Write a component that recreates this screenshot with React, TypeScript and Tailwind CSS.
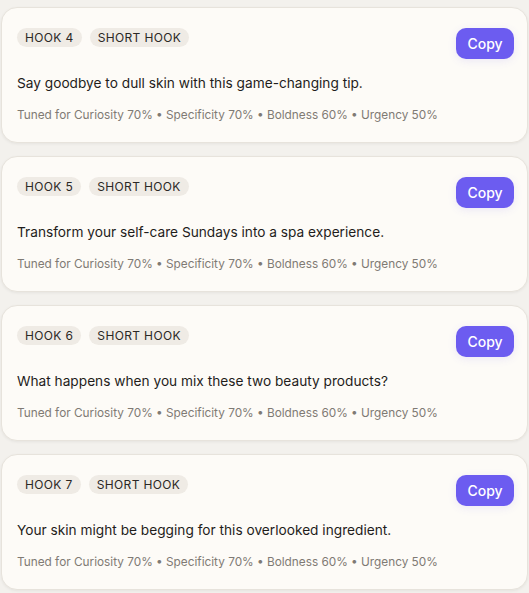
import React from "react";

const hooks = [
  { n: 4, text: "Say goodbye to dull skin with this game-changing tip." },
  { n: 5, text: "Transform your self-care Sundays into a spa experience." },
  { n: 6, text: "What happens when you mix these two beauty products?" },
  { n: 7, text: "Your skin might be begging for this overlooked ingredient." },
];

function Card({ n, text }: { n: number; text: string }) {
  return (
    <div className="rounded-[16px] border border-[#e7e3dc] bg-[#fdfbf7] pl-[15px] pr-[13px] pt-5 pb-[19px] shadow-[0_1px_3px_rgba(0,0,0,0.06)]">
      <div className="flex items-start justify-between">
        <div className="flex gap-2">
          <span className="flex h-[19px] items-center rounded-full bg-[#efebe5] px-2 text-[12px] leading-none tracking-[0.03em] text-[#2b2825]">
            HOOK {n}
          </span>
          <span className="flex h-[19px] items-center rounded-full bg-[#efebe5] px-2 text-[12px] leading-none tracking-[0.03em] text-[#2b2825]">
            SHORT HOOK
          </span>
        </div>
        <button className="h-[31px] w-[58px] rounded-[10px] bg-[#6c5cf0] text-[14px] font-medium text-white shadow-[0_2px_8px_rgba(108,92,240,0.12)]">
          Copy
        </button>
      </div>
      <p className="mt-[14px] text-[13.7px] leading-[20px] text-[#1f1d1b]">{text}</p>
      <p className="mt-[14px] text-[11.8px] leading-[16px] text-[#7f7a74]">
        Tuned for Curiosity 70% • Specificity 70% • Boldness 60% • Urgency 50%
      </p>
    </div>
  );
}

export default function App() {
  return (
    <div
      className="min-h-[593px] w-[529px] bg-[#f3f1ed] pl-[1px] pr-[1px] pt-[7px]"
      style={{ fontFamily: "Inter, 'Noto Sans', sans-serif" }}
    >
      <div className="flex flex-col gap-[13px]">
        {hooks.map((h) => (
          <Card key={h.n} n={h.n} text={h.text} />
        ))}
      </div>
    </div>
  );
}
